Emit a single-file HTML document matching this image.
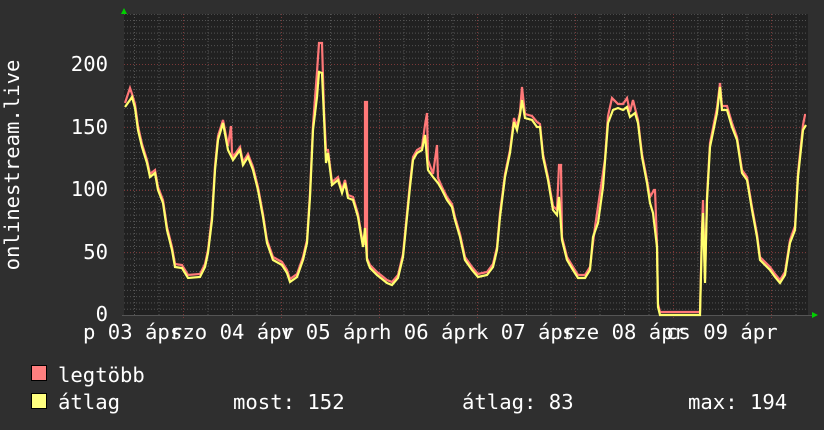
<!DOCTYPE html>
<html><head><meta charset="utf-8"><style>
html,body{margin:0;padding:0;background:#2f2f2f;}
svg{display:block;}
text{font-family:"DejaVu Sans Mono","Liberation Mono",monospace;fill:#fff;font-size:20.6px;}
</style></head><body>
<svg width="824" height="430" xmlns="http://www.w3.org/2000/svg">
<defs>
<pattern id="hmin" width="684" height="6.275" patternUnits="userSpaceOnUse" x="124" y="315">
<line x1="0" y1="0.5" x2="684" y2="0.5" stroke="#555" stroke-width="1" stroke-dasharray="1,2"/>
</pattern>
<pattern id="vmin" width="24.5" height="301" patternUnits="userSpaceOnUse" x="134" y="14">
<line x1="0.5" y1="0" x2="0.5" y2="301" stroke="#555" stroke-width="1" stroke-dasharray="1,2"/>
</pattern>
</defs>
<rect x="0" y="0" width="824" height="430" fill="#2f2f2f"/>
<rect x="124" y="14" width="684" height="301" fill="#212121"/>
<rect x="124" y="14" width="684" height="301" fill="url(#hmin)"/>
<rect x="124" y="14" width="684" height="301" fill="url(#vmin)"/>
<g stroke="#7a3838" stroke-width="1" stroke-dasharray="1,2">
<line x1="124" y1="64.5" x2="808" y2="64.5"/>
<line x1="124" y1="127.5" x2="808" y2="127.5"/>
<line x1="124" y1="190.5" x2="808" y2="190.5"/>
<line x1="124" y1="252.5" x2="808" y2="252.5"/>
<line x1="183.5" y1="14" x2="183.5" y2="318"/>
<line x1="281.5" y1="14" x2="281.5" y2="318"/>
<line x1="379.5" y1="14" x2="379.5" y2="318"/>
<line x1="477.5" y1="14" x2="477.5" y2="318"/>
<line x1="575.5" y1="14" x2="575.5" y2="318"/>
<line x1="673.5" y1="14" x2="673.5" y2="318"/>
<line x1="771.5" y1="14" x2="771.5" y2="318"/>
</g>
<line x1="122" y1="315.5" x2="812" y2="315.5" stroke="#555" stroke-width="1"/>
<polygon points="121,14 124,8 127,14" fill="#00d000"/>
<polygon points="812,312 818,315 812,318" fill="#00d000"/>

<g fill="none" stroke-linejoin="miter" stroke-width="2.2">
<polyline stroke="#ff7878" points="125,103 130,88 132,94 135,104 138,126 142,144 147,160 150,174 155,170 158,187 163,200 167,227 172,247 175,264 182,265 188,275 200,274 205,264 208,250 212,216 215,166 218,136 223,120 228,146 231,126 232,152 233,157 240,147 243,162 248,154 253,167 258,187 263,214 267,240 273,257 282,262 287,270 290,279 297,274 303,257 307,240 310,193 313,125 317,72 319,43 322,43 324,110 326,150 328,150 332,182 338,177 342,190 345,180 348,195 353,197 358,214 363,244 365,244 365,102 367,102 367,258 370,265 377,272 387,280 392,282 398,275 403,254 407,213 410,183 413,157 417,150 422,147 425,125 427,113 428,160 433,174 437,145 438,178 442,187 447,197 452,204 455,217 460,234 465,257 472,267 478,274 487,272 493,264 497,247 500,213 505,174 510,150 514,118 517,126 520,112 522,87 525,114 532,116 537,122 540,124 543,154 548,177 553,206 557,210 559,165 561,165 562,237 567,257 573,267 578,275 585,275 590,267 595,227 600,193 605,159 608,116 612,98 618,104 623,104 627,98 630,112 633,100 635,108 638,120 642,154 647,180 650,197 654,190 655,190 657,244 658,304 660,312 700,312 702,228 703,200 705,280 707,196 710,143 717,108 720,83 722,106 727,106 732,123 737,137 742,170 747,177 752,207 757,234 760,257 765,262 770,267 775,274 780,280 785,272 790,240 795,226 798,173 803,125 805,115 806,115"/>
<polyline stroke="#ffff6e" points="125,107 130,100 132,97 135,108 138,130 142,147 147,163 150,177 155,173 158,190 163,203 167,230 172,250 175,267 182,268 188,278 200,277 205,267 208,253 212,220 215,170 218,140 223,123 228,150 233,160 240,150 243,165 248,157 253,170 258,190 263,217 267,243 273,260 282,265 287,273 290,282 297,277 303,260 307,243 310,197 313,130 317,97 319,72 322,73 324,117 326,163 328,153 332,185 338,180 342,193 345,183 348,198 353,200 358,217 363,247 365,228 367,260 370,268 377,275 387,283 392,285 398,278 403,257 407,217 410,187 413,160 417,153 422,150 425,135 428,170 433,177 438,183 442,190 447,200 452,207 455,220 460,237 465,260 472,270 478,277 487,275 493,267 497,250 500,217 505,177 510,153 514,122 517,130 520,115 522,100 525,118 532,120 537,127 540,127 543,157 548,180 553,210 557,215 559,197 562,240 567,260 573,270 578,278 585,278 590,270 593,237 598,223 603,187 608,123 613,110 618,108 623,110 627,107 630,117 635,113 638,123 642,157 647,183 650,203 653,213 657,247 658,307 660,315 700,315 702,233 703,213 705,283 707,200 710,147 717,113 720,87 722,110 727,110 732,127 737,140 742,173 747,180 752,210 757,237 760,260 765,265 770,270 775,277 780,283 785,275 790,243 795,230 798,177 803,130 806,125"/>
</g>

<text x="108" y="71" text-anchor="end">200</text>
<text x="108" y="134" text-anchor="end">150</text>
<text x="108" y="196" text-anchor="end">100</text>
<text x="108" y="259" text-anchor="end">50</text>
<text x="108" y="321" text-anchor="end">0</text>
<text transform="translate(19,165) rotate(-90)" text-anchor="middle">onlinestream.live</text>

<text x="83" y="339">p 03 ápr</text>
<text x="170" y="339">szo 04 ápr</text>
<text x="281" y="339">v 05 ápr</text>
<text x="379" y="339">h 06 ápr</text>
<text x="476" y="339">k 07 ápr</text>
<text x="562" y="339">sze 08 ápr</text>
<text x="666" y="339">cs 09 ápr</text>

<rect x="31.5" y="365.5" width="15" height="15" fill="#ff7f7f" stroke="#000" stroke-width="1"/>
<rect x="31.5" y="393.5" width="15" height="15" fill="#ffff7f" stroke="#000" stroke-width="1"/>
<text x="58" y="382">legtöbb</text>
<text x="58" y="409">átlag</text>
<text x="233" y="409">most: 152</text>
<text x="462" y="409">átlag: 83</text>
<text x="688" y="409">max: 194</text>
</svg>
</body></html>
